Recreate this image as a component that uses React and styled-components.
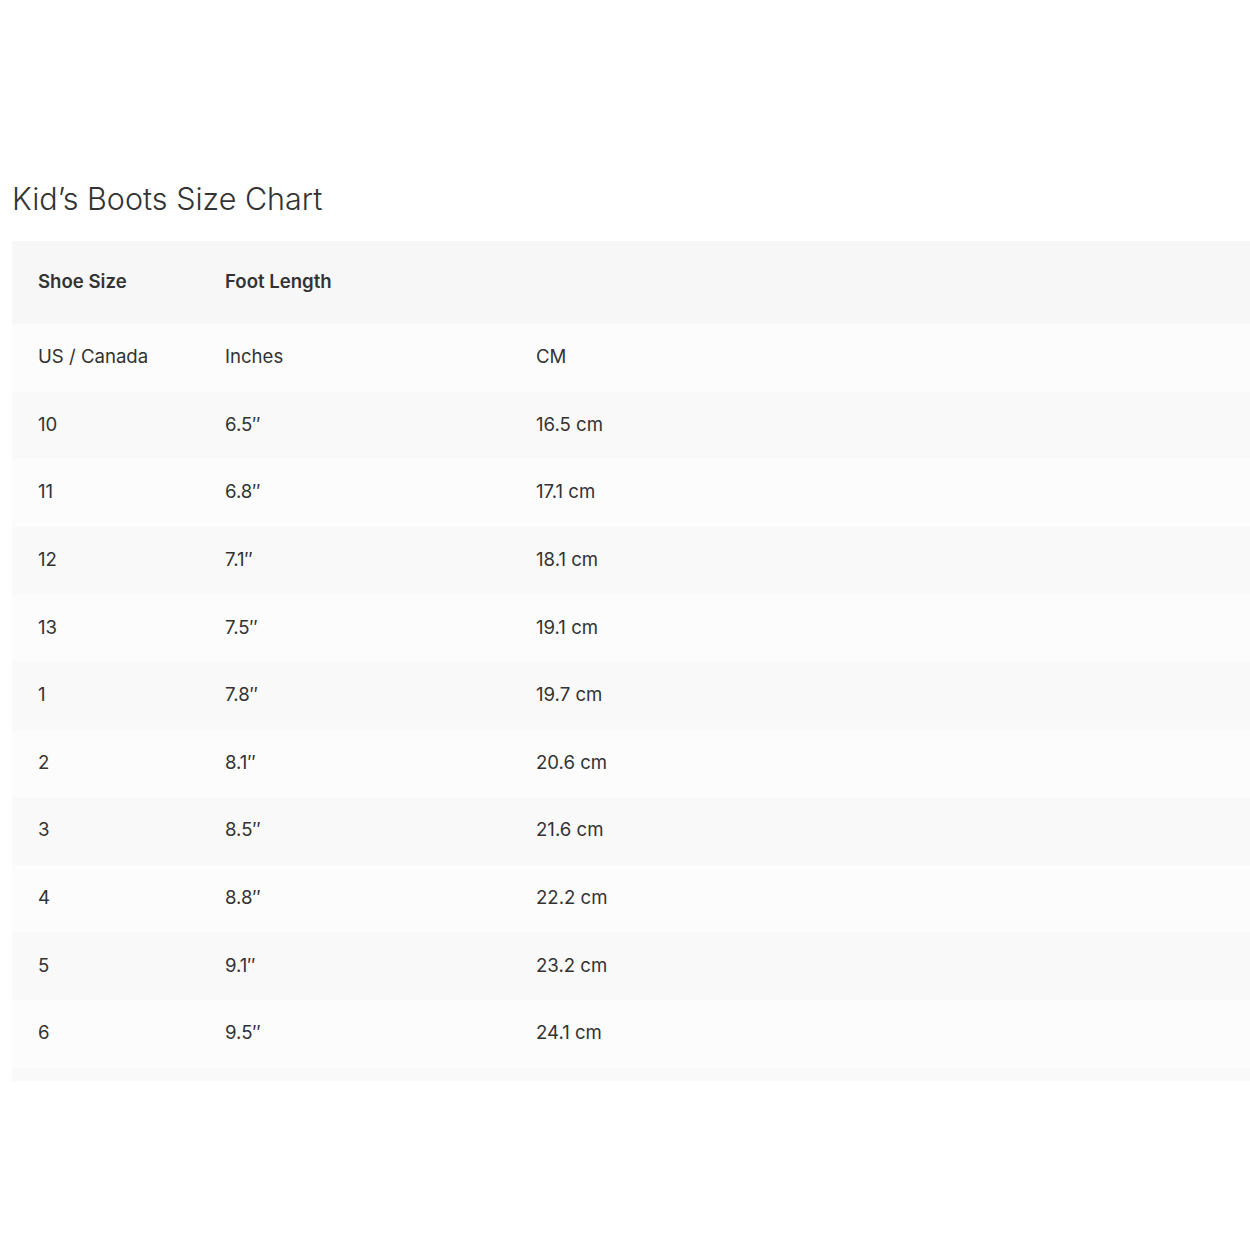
import React from "react";
import styled, { createGlobalStyle } from "styled-components";

const GlobalStyle = createGlobalStyle`
    html, body {
        margin: 0;
        padding: 0;
        background: #ffffff;
    }
    body {
        font-family: Inter, "Noto Sans", Arial, sans-serif;
        color: #333333;
    }
`;

const Page = styled.div`
    padding: 181px 0 0 12px;
    width: 1250px;
    box-sizing: border-box;
`;

const Title = styled.h2`
    margin: 0 0 24px;
    font-size: 30.5px;
    line-height: 36px;
    font-weight: 300;
    color: #333333;
`;

const Table = styled.div`
    width: 1238px;
    background: #f9f9f9;
    padding-bottom: 13px;
`;

const Row = styled.div`
    display: grid;
    grid-template-columns: 187px 311px 1fr;
    align-items: center;
    height: ${(p) => (p.$head ? "83px" : "67.6px")};
    background: ${(p) => (p.$head ? "#f7f7f7" : p.$odd ? "#fcfcfc" : "#f9f9f9")};
`;

const Cell = styled.div`
    padding: 0 0 3px 26px;
    font-size: 18.6px;
    font-weight: ${(p) => (p.$bold ? 600 : 400)};
    color: #333333;
    white-space: nowrap;
`;

const sizes = [
    ["10", "6.5\u2033", "16.5 cm"],
    ["11", "6.8\u2033", "17.1 cm"],
    ["12", "7.1\u2033", "18.1 cm"],
    ["13", "7.5\u2033", "19.1 cm"],
    ["1", "7.8\u2033", "19.7 cm"],
    ["2", "8.1\u2033", "20.6 cm"],
    ["3", "8.5\u2033", "21.6 cm"],
    ["4", "8.8\u2033", "22.2 cm"],
    ["5", "9.1\u2033", "23.2 cm"],
    ["6", "9.5\u2033", "24.1 cm"],
];

export default function App() {
    const rows = [["US / Canada", "Inches", "CM"], ...sizes];
    return (
        <Page>
            <GlobalStyle />
            <Title>Kid’s Boots Size Chart</Title>
            <Table>
                <Row $head>
                    <Cell $bold>Shoe Size</Cell>
                    <Cell $bold>Foot Length</Cell>
                    <Cell />
                </Row>
                {rows.map((r, i) => (
                    <Row key={i} $odd={i % 2 === 0}>
                        {r.map((c, j) => (
                            <Cell key={j}>{c}</Cell>
                        ))}
                    </Row>
                ))}
            </Table>
        </Page>
    );
}
